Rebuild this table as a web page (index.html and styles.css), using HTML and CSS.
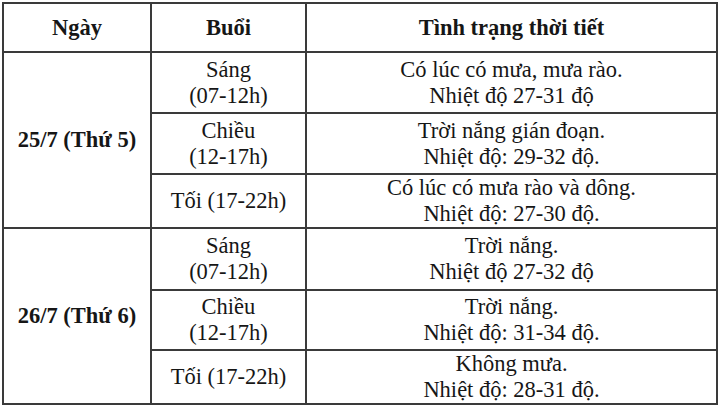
FILE: index.html
```html
<!DOCTYPE html>
<html lang="vi">
<head>
<meta charset="utf-8">
<link rel="stylesheet" href="styles.css">
</head>
<body>
<div class="weather">
  <div class="cell head">Ngày</div>
  <div class="cell head">Buổi</div>
  <div class="cell head">Tình trạng thời tiết</div>

  <div class="cell day day1">25/7 (Thứ 5)</div>
  <div class="cell">Sáng<br>(07-12h)</div>
  <div class="cell">Có lúc có mưa, mưa rào.<br>Nhiệt độ 27-31 độ</div>
  <div class="cell">Chiều<br>(12-17h)</div>
  <div class="cell">Trời nắng gián đoạn.<br>Nhiệt độ: 29-32 độ.</div>
  <div class="cell">Tối (17-22h)</div>
  <div class="cell">Có lúc có mưa rào và dông.<br>Nhiệt độ: 27-30 độ.</div>

  <div class="cell day day2">26/7 (Thứ 6)</div>
  <div class="cell">Sáng<br>(07-12h)</div>
  <div class="cell">Trời nắng.<br>Nhiệt độ 27-32 độ</div>
  <div class="cell">Chiều<br>(12-17h)</div>
  <div class="cell">Trời nắng.<br>Nhiệt độ: 31-34 độ.</div>
  <div class="cell">Tối (17-22h)</div>
  <div class="cell">Không mưa.<br>Nhiệt độ: 28-31 độ.</div>
</div>
</body>
</html>
```
FILE: styles.css
```css
html, body {
  margin: 0;
  padding: 0;
  background: #ffffff;
}

body {
  font-family: "Liberation Serif", "Times New Roman", Times, serif;
  color: #161616;
  width: 720px;
  height: 406px;
  overflow: hidden;
}

.weather {
  margin: 2px 0 0 2px;
  width: 716px;
  box-sizing: border-box;
  padding: 2px;
  background: #3a3a3a;
  display: grid;
  grid-template-columns: 146px 153px 409px;
  grid-template-rows: 47px 59px 59px 52px 60px 58px 52px;
  gap: 2px;
  font-size: 22.5px;
  line-height: 26px;
}

.cell {
  background: #ffffff;
  display: flex;
  align-items: center;
  justify-content: center;
  text-align: center;
}

.head {
  font-weight: bold;
}

.day {
  font-weight: bold;
  grid-column: 1;
}

.day1 {
  grid-row: 2 / span 3;
}

.day2 {
  grid-row: 5 / span 3;
}
```
